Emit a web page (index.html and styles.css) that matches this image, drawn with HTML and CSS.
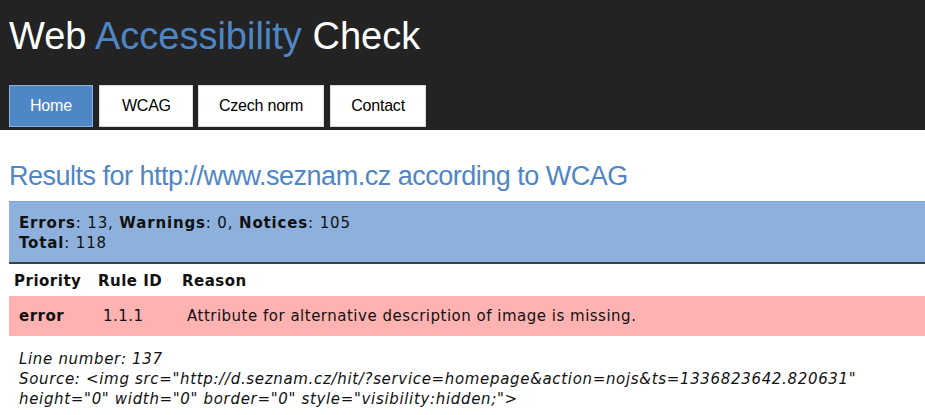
FILE: index.html
```html
<!DOCTYPE html>
<html lang="en">
<head>
  <meta charset="UTF-8" />
  <title>Web Accessibility Check</title>
  <link rel="stylesheet" href="styles.css">
</head>
<body>
  <div class="header">
    <h1 class="logo">Web <span class="accent">Accessibility</span> Check</h1>
    <ul class="menu">
      <li><a href="#" class="active">Home</a></li>
      <li><a href="#" class="wide">WCAG</a></li>
      <li><a href="#">Czech norm</a></li>
      <li><a href="#">Contact</a></li>
    </ul>
  </div>

  <div class="content">
    <h2 class="results-title">Results for http://www.seznam.cz according to WCAG</h2>

    <div class="summary">
      <b>Errors</b>: 13, <b>Warnings</b>: 0, <b>Notices</b>: 105<br>
      <b>Total</b>: 118
    </div>

    <table class="results">
      <colgroup>
        <col class="col-priority">
        <col class="col-rule">
        <col>
      </colgroup>
      <tr>
        <th>Priority</th>
        <th>Rule ID</th>
        <th>Reason</th>
      </tr>
      <tr class="row-error">
        <td class="priority">error</td>
        <td>1.1.1</td>
        <td>Attribute for alternative description of image is missing.</td>
      </tr>
    </table>

    <div class="detail">
      Line number: 137<br>
      Source: &lt;img src="http://d.seznam.cz/hit/?service=homepage&amp;action=nojs&amp;ts=1336823642.820631"<br>
      height="0" width="0" border="0" style="visibility:hidden;"&gt;
    </div>
  </div>
</body>
</html>
```

FILE: styles.css
```css
body {
  margin: 0;
  font-family: "DejaVu Sans", Verdana, sans-serif;
  font-size: 15px;
  letter-spacing: 0.5px;
  color: #111;
  background: #fff;
  overflow: hidden;
}

.header {
  background: #232323;
  padding: 15px 0 3px 9px;
}

.logo {
  margin: 0;
  font-family: "Liberation Sans", Arial, sans-serif;
  font-weight: normal;
  font-size: 38px;
  letter-spacing: 0;
  color: #fff;
}

.logo .accent {
  color: #4f86c6;
}

.menu {
  list-style: none;
  margin: 27px 0 0 0;
  padding: 0;
  display: flex;
  gap: 6px;
}

.menu a {
  display: block;
  padding: 11px 20px 11px 20px;
  background: #fff;
  border: 1px solid #ddd;
  color: #000;
  text-decoration: none;
  font-family: "Liberation Sans", Arial, sans-serif;
  font-size: 16px;
  letter-spacing: -0.2px;
}

.menu a.wide {
  padding: 11px 21px 11px 22px;
  margin-right: -1px;
}

.menu a.active {
  background: #4f86c6;
  border-color: #8ab0e0;
  color: #fff;
}

.content {
  padding: 0 0 0 9px;
}

.results-title {
  margin: 31px 0 9px 0;
  font-family: "Liberation Sans", Arial, sans-serif;
  font-weight: normal;
  font-size: 27px;
  letter-spacing: -0.5px;
  color: #4f86c6;
}

.summary {
  background: #8db1dc;
  border-top: 1px solid #7fa4d2;
  border-bottom: 2px solid #39414d;
  padding: 11px 10px 9px 10px;
  line-height: 20px;
  letter-spacing: 0.85px;
}

.results {
  width: 100%;
  border-collapse: collapse;
  table-layout: fixed;
  margin-top: 5px;
}

.col-priority,
.col-rule {
  width: 84px;
}

.results th {
  text-align: left;
  font-weight: bold;
  padding: 3px 5px 6px 5px;
}

.results td {
  padding: 11px 10px 11px 10px;
  background: #ffb2b2;
}

.results td.priority {
  font-weight: bold;
}

.detail {
  font-style: italic;
  letter-spacing: 0.67px;
  padding: 13px 10px 10px 10px;
  line-height: 20px;
}
```
